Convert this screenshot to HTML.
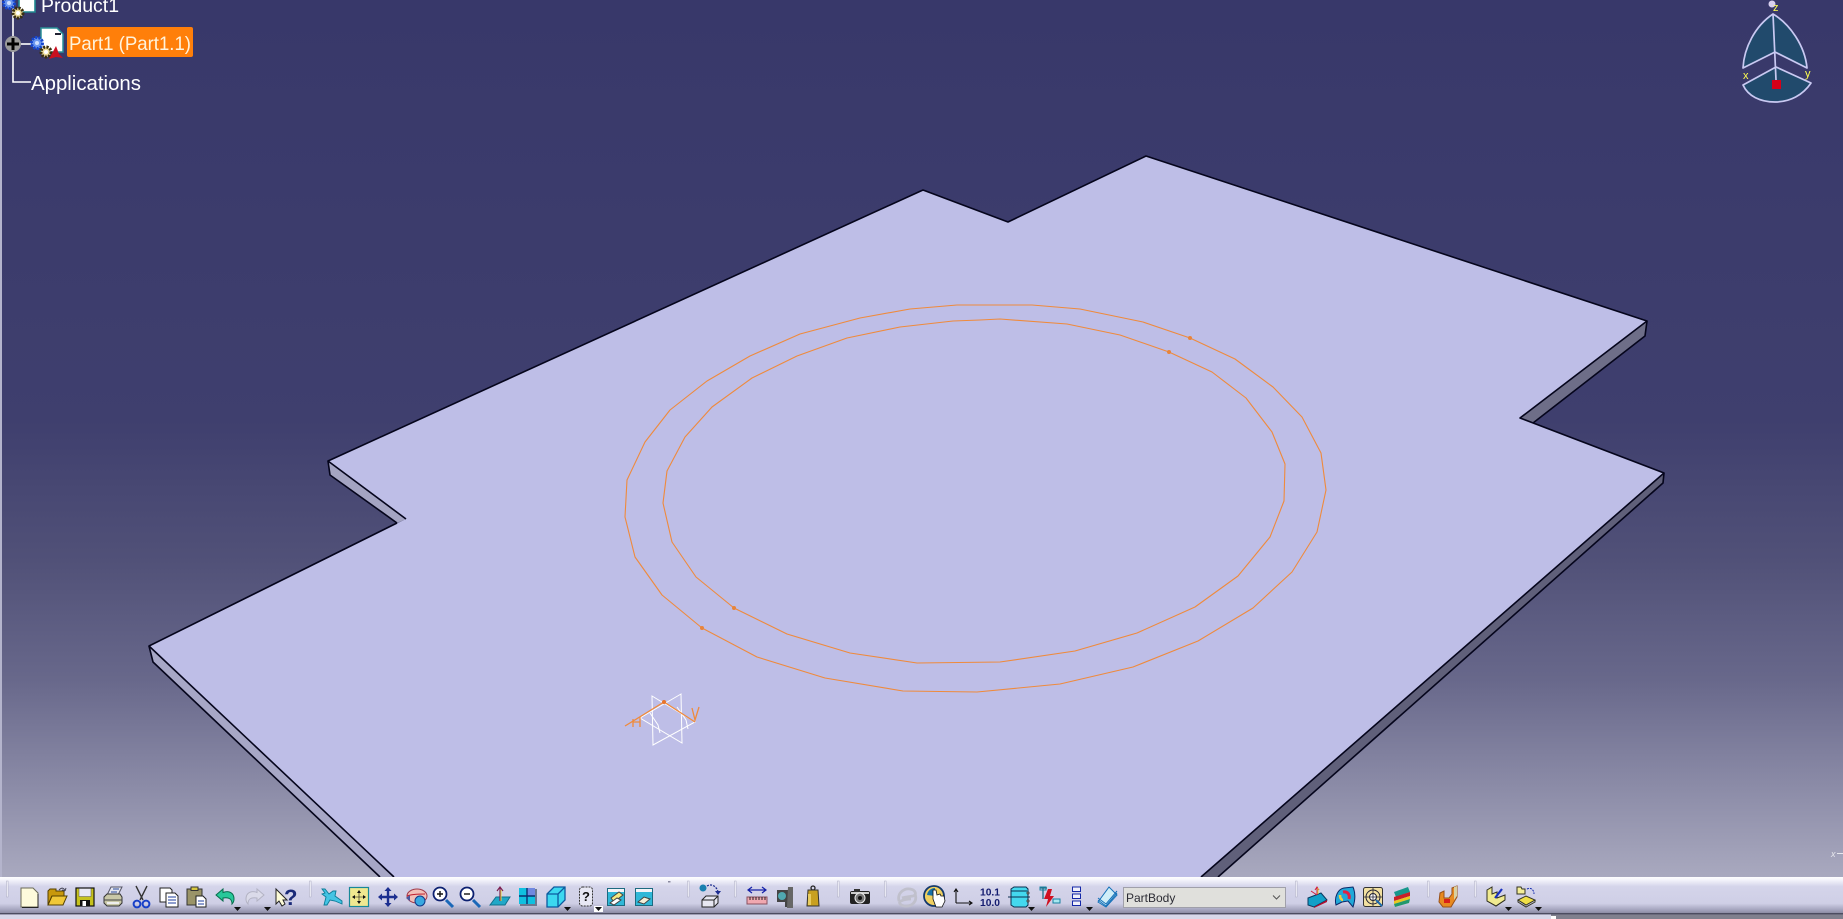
<!DOCTYPE html>
<html><head><meta charset="utf-8"><title>Product1</title>
<style>
html,body{margin:0;padding:0;width:1843px;height:919px;overflow:hidden;background:#38386a}
svg{display:block;position:absolute;left:0;top:0}
text{font-family:"Liberation Sans",sans-serif}
</style></head><body>
<svg width="1843" height="919" viewBox="0 0 1843 919" xmlns="http://www.w3.org/2000/svg">
<defs>
<linearGradient id="bg" gradientUnits="userSpaceOnUse" x1="0" y1="0" x2="0" y2="877">
<stop offset="0" stop-color="#38386a"/><stop offset=".48" stop-color="#3f3f6e"/><stop offset=".64" stop-color="#515178"/><stop offset=".775" stop-color="#68688b"/><stop offset="1" stop-color="#a9a9bf"/>
</linearGradient>
<linearGradient id="tb" gradientUnits="userSpaceOnUse" x1="0" y1="876" x2="0" y2="914">
<stop offset="0" stop-color="#fff"/><stop offset=".08" stop-color="#f8f8fd"/><stop offset=".28" stop-color="#d4d4ea"/><stop offset=".72" stop-color="#cfcfe6"/><stop offset=".92" stop-color="#9c9cb6"/><stop offset="1" stop-color="#84849c"/>
</linearGradient>
</defs>
<rect width="1843" height="877" fill="url(#bg)"/>
<rect x="0" y="0" width="2" height="877" fill="#b4b4cc"/>

<!-- plate -->
<polygon points="149,646 153,662 380,877 394,877" fill="#a7a7c6"/>
<polygon points="328,461 330,475 397,523 406,519" fill="#a4a4c2"/>
<polygon points="1647,321 1645,336 1533,423 1520,418" fill="#6e6e88"/>
<polygon points="1664,473 1663,483 1218,877 1201,877" fill="#60607a"/>
<polygon points="149,646 406,519 328,461 923,190 1008,222 1146,156 1647,321 1520,418 1664,473 1201,877 394,877" fill="#bebee7"/>
<g fill="none" stroke="#05051c" stroke-width="1.6" stroke-linejoin="round">
<polyline points="394,877 149,646 397,523"/>
<polyline points="406,519 328,461 923,190 1008,222 1146,156 1647,321 1520,418 1664,473 1201,877"/>
<polyline points="149,646 153,662 380,877"/>
<polyline points="328,461 330,475 397,523"/>
<polyline points="1647,321 1645,336 1533,423"/>
<polyline points="1664,473 1663,483 1218,877"/>
</g>

<!-- rings -->
<g fill="none" stroke="#ef8a3c" stroke-width="1.1" stroke-linejoin="round">
<polygon points="970,305 1032,305 1080,309 1143,322 1190,338 1235,359 1273,387 1302,417 1321,453 1326,490 1317,532 1292,572 1253,608 1198,641 1133,667 1060,684 977,692 903,691 825,678 757,657 702,628 662,595 635,557 625,517 627,480 645,442 670,410 707,381 750,356 800,334 860,318 910,309 957,305"/>
<polygon points="980,320 1000,319 1067,324 1120,335 1169,352 1212,372 1246,398 1272,432 1285,464 1284,501 1270,537 1238,576 1195,607 1137,633 1075,651 1000,662 917,663 850,653 787,634 734,608 696,577 672,542 663,503 667,471 685,437 712,407 752,378 797,356 847,338 900,327 953,321"/>
</g>
<g fill="#e8843a"><circle cx="734" cy="608" r="2"/><circle cx="702" cy="628" r="2"/><circle cx="1190" cy="338" r="2"/><circle cx="1169" cy="352" r="2"/></g>

<!-- sketch gizmo -->
<g fill="none" stroke="#fff" stroke-width="1">
<polygon points="652,696 695,722 653,745"/><polygon points="681,694 640,718 682,743"/>
<polyline points="650,713 658,725 660,733"/><polyline points="677,707 686,720 688,729"/>
</g>
<g fill="none" stroke="#ef8a3c" stroke-width="1.3">
<polyline points="625,726 664,702 695,722"/>
<path d="M633,719v8M640,717v10M633,722h7M692,708l3,12l4,-13"/>
</g>
<circle cx="664" cy="702" r="2" fill="#e8742a"/>

<!-- compass -->
<g stroke="#c9c9f2" stroke-width="1.7" stroke-linejoin="round">
<path d="M1773,14C1755,26 1744,48 1743,68L1775,52L1807,68C1805,46 1790,24 1773,14Z" fill="#214a6c"/>
<path d="M1743,85L1776,67L1811,83C1803,95 1790,102 1775,102C1760,102 1748,96 1743,85Z" fill="#214a6c"/>
<path d="M1773,14L1776,80" fill="none"/>
</g>
<circle cx="1772" cy="4" r="3.5" fill="#d8d0f0"/>
<rect x="1772" y="80" width="9" height="9" fill="#d80018"/>
<g fill="#ffff50" font-size="11"><text x="1773" y="11">z</text><text x="1743" y="79">x</text><text x="1805" y="77">y</text></g>
<g fill="#fff" opacity=".75"><text x="1831" y="857" font-size="9" font-style="italic">x</text><rect x="1837" y="853" width="6" height="1"/></g>

<!-- tree -->
<g stroke="#fff" fill="none" stroke-width="1.6">
<path d="M13,0V82H31"/><path d="M20,44H31"/>
</g>
<text x="41" y="12" font-size="19.5" fill="#fff">Product1</text>
<rect x="67" y="27" width="126" height="30" rx="2" fill="#ff7f0a"/>
<text x="69" y="50" font-size="19.5" fill="#fff3dc" textLength="122" lengthAdjust="spacingAndGlyphs">Part1 (Part1.1)</text>
<text x="31" y="90" font-size="20.4" fill="#fff">Applications</text>
<circle cx="13" cy="44" r="8" fill="#9a9a9a"/><path d="M7,44H19M13,38V50" stroke="#000" stroke-width="3"/>
<!-- product icon -->
<path d="M19,-4H35V12H19Z" fill="#fff" stroke="#208890" stroke-width="1.6"/>
<circle cx="9" cy="3" r="5.5" fill="#6c98f0" stroke="#1446d0" stroke-dasharray="2.2 1.2" stroke-width="3"/><circle cx="9" cy="3" r="2" fill="#cfe0ff"/>
<circle cx="18" cy="13" r="5" fill="#ecdc98" stroke="#3a2f10" stroke-dasharray="2.2 1.2" stroke-width="3"/><circle cx="18" cy="13" r="2" fill="#fff"/>
<!-- part icon -->
<path d="M41,28H57L63,34V52H41Z" fill="#fff" stroke="#2a9098" stroke-width="1.5"/><rect x="55" y="33" width="6" height="2" fill="#223"/>
<circle cx="37" cy="43" r="5.5" fill="#6c98f0" stroke="#1446d0" stroke-dasharray="2.2 1.2" stroke-width="3"/><circle cx="37" cy="43" r="2" fill="#cfe0ff"/>
<circle cx="46" cy="52" r="5" fill="#ecdc98" stroke="#3a2f10" stroke-dasharray="2.2 1.2" stroke-width="3"/><circle cx="46" cy="52" r="2" fill="#fff"/>
<path d="M49,59L56,46L59,54L63,58L56,57Z" fill="#c81020"/>

<!-- toolbar -->
<rect x="0" y="877" width="1843" height="37" fill="url(#tb)"/>
<rect x="0" y="913" width="1843" height="1.4" fill="#4c4c60"/>
<rect x="0" y="914.4" width="1551" height="5" fill="#d8d8ea"/>
<rect x="1551" y="914.4" width="292" height="5" fill="#80808e"/>
<rect x="1551" y="916" width="5" height="3" fill="#fff"/>
<!-- separators -->
<g fill="#f4f4fb" stroke="#a8a8c0" stroke-width=".5">
<rect x="6.5" y="881" width="1.6" height="16"/><rect x="309.5" y="881" width="1.6" height="16"/><rect x="687.5" y="881" width="1.6" height="16"/><rect x="734.5" y="881" width="1.6" height="16"/><rect x="837.5" y="881" width="1.6" height="16"/><rect x="884.5" y="881" width="1.6" height="16"/><rect x="1295.5" y="881" width="1.6" height="16"/><rect x="1427.5" y="881" width="1.6" height="16"/><rect x="1474.5" y="881" width="1.6" height="16"/>
</g>
<rect x="668" y="881" width="2.5" height="1.5" fill="#8a8aa0"/>
<!-- dropdown arrows -->
<g fill="#111"><path d="M234,907h7l-3.5,4zM264,907h7l-3.5,4zM564,907h7l-3.5,4zM1028,907h7l-3.5,4zM1086,907h7l-3.5,4zM1505,907h7l-3.5,4zM1535,907h7l-3.5,4z"/></g>
<rect x="594" y="906" width="9" height="6" fill="#fff"/><path d="M595,907h7l-3.5,4z" fill="#111"/>

<!-- new -->
<g transform="translate(29,897)"><path d="M-8,-9H4L9,-4V10H-8Z" fill="#fdfadc" stroke="#6a6a58"/><path d="M9,-3V10.500H-7" fill="none" stroke="#222"/></g>
<!-- open -->
<g transform="translate(57,897)"><path d="M-9,8V-6L-7,-8H-1V-6H7V-1H-5L-9,8Z" fill="#c8980c" stroke="#554000"/><path d="M-9,8L-5,-1H10L6,8Z" fill="#f0c838" stroke="#554000"/><path d="M2,-7C5,-10 7,-9 8,-6M8,-6L5,-7M8,-6L9,-9" fill="none" stroke="#445" /></g>
<!-- save -->
<g transform="translate(85,897)"><rect x="-9" y="-9" width="18" height="18" fill="#c6c21c" stroke="#111" stroke-width="1.2"/><rect x="-6" y="-8.500" width="12" height="8" fill="#e8e8f2" stroke="#555" stroke-width=".5"/><rect x="-5" y="3" width="10" height="6" fill="#111"/><rect x="-2.500" y="4" width="3.500" height="5" fill="#fff"/></g>
<!-- print -->
<g transform="translate(113,897)"><path d="M-2,-10H9L5,-2H-6Z" fill="#e4e6f0" stroke="#556"/><path d="M0,-8h6M-2,-5h6" stroke="#2a4a9a"/><path d="M-9,0L-6,-3H7L9,0V6L6,9H-6L-9,6Z" fill="#c9c8a8" stroke="#333"/><path d="M-9,3H9" stroke="#444"/><rect x="-6" y="5" width="12" height="2" fill="#eee"/></g>
<!-- cut -->
<g transform="translate(141,897)"><path d="M-5,-11L2,3M6,-11L-1,3" stroke="#333" stroke-width="1.4" fill="none"/><circle cx="-4" cy="7" r="3.400" fill="none" stroke="#1840c8" stroke-width="2"/><circle cx="5" cy="7" r="3.400" fill="none" stroke="#1840c8" stroke-width="2"/></g>
<!-- copy -->
<g transform="translate(169,897)"><path d="M-9,-9H1L3,-7V5H-9Z" fill="#fff" stroke="#222"/><path d="M-3,-4H6L9,-1V10H-3Z" fill="#fff" stroke="#222"/><path d="M-1,0h8M-1,3h8M-1,6h8" stroke="#1c3c9c"/></g>
<!-- paste -->
<g transform="translate(197,897)"><rect x="-10" y="-8" width="15" height="16" fill="#9a9468" stroke="#333"/><rect x="-6" y="-10" width="7" height="3.500" fill="#d8c840" stroke="#333"/><path d="M-1,-1H6L9,2V10H-1Z" fill="#fff" stroke="#222"/><path d="M1,4h6M1,7h6" stroke="#1c3c9c"/></g>
<!-- undo -->
<g transform="translate(225,897)"><path d="M-9,-2L-2,-8V-4.500C4,-7 9,-4 9,2C9,4 8,6 7,7C7,2 4,0 -2,1V4Z" fill="#28c89a" stroke="#086c4c"/></g>
<!-- redo -->
<g transform="translate(255,897)" opacity=".9"><path d="M9,-2L2,-8V-4.500C-4,-7 -9,-4 -9,2C-9,4 -8,6 -7,7C-7,2 -4,0 2,1V4Z" fill="#dcdcea" stroke="#b0b0c0"/></g>
<!-- help -->
<g transform="translate(285,897)"><path d="M-9,-8V7L-6,4L-3,9L0,7L-2,3H2Z" fill="#fdfbd8" stroke="#222"/><text x="-1" y="8" font-size="22" font-weight="bold" fill="#1a2a78">?</text></g>
<!-- fly -->
<g transform="translate(332,897)"><path d="M-10,-8L-7,-8L-3,-3L1,-6L4,-6L3,-1L10,4L10,7L3,4L-2,3L-5,8L-8,8L-6,0L-10,-3L-7,-4Z" fill="#44c4e4" stroke="#0c7c98" stroke-width=".9"/></g>
<!-- fit -->
<g transform="translate(359,897)"><rect x="-9.500" y="-9.500" width="19" height="19" fill="#f0e890" stroke="#188898" stroke-width="1.2"/><path d="M0,-7l-2,3h4zM0,7l-2,-3h4zM-7,0l3,-2v4zM7,0l-3,-2v4z" fill="#111"/><path d="M0,-5V5M-5,0H5" stroke="#111" stroke-width=".6"/></g>
<!-- pan -->
<g transform="translate(388,897)"><path d="M0,-10l-3.500,4h2.300v4.800h-4.800v-2.300l-4,3.500l4,3.500v-2.300h4.800v4.800h-2.300l3.500,4l3.500,-4h-2.300v-4.800h4.800v2.300l4,-3.500l-4,-3.500v2.300h-4.800v-4.800h2.300z" fill="#1c2f90"/></g>
<!-- rotate -->
<g transform="translate(416,897)"><ellipse cx="1" cy="-1" rx="10" ry="7" fill="#f2c0b8" stroke="#a03848"/><path d="M-9,-1C-4,-3 4,-3 9,-3" stroke="#c02030" fill="none"/><circle cx="4" cy="4" r="5" fill="#38a8e0" stroke="#103888"/><path d="M-10,1L-6,-2V4Z" fill="#4858a0"/></g>
<!-- zoom in -->
<g transform="translate(443,897)"><path d="M3,3L10,10" stroke="#1a68b8" stroke-width="3"/><circle cx="-3" cy="-3" r="6.500" fill="#fff" stroke="#0c2070" stroke-width="1.800"/><path d="M-6,-3H0M-3,-6V0" stroke="#111" stroke-width="1.400"/></g>
<!-- zoom out -->
<g transform="translate(470,897)"><path d="M3,3L10,10" stroke="#1a68b8" stroke-width="3"/><circle cx="-3" cy="-3" r="6.500" fill="#fff" stroke="#0c2070" stroke-width="1.800"/><path d="M-6,-3H0" stroke="#111" stroke-width="1.400"/></g>
<!-- normal view -->
<g transform="translate(500,897)"><path d="M-10,8L-4,0H10L5,8Z" fill="#20a8c8" stroke="#10708c"/><path d="M0,4V-9M-3,-6L0,-10L3,-6" fill="none" stroke="#7c2050" stroke-width="1.200"/><path d="M1,4V-7" stroke="#e8d840" stroke-width="1"/></g>
<!-- multi view -->
<g transform="translate(528,897)"><rect x="-9" y="-9" width="16" height="16" fill="#10c0e0"/><rect x="-1" y="-9" width="8" height="8" fill="#7088e0"/><path d="M-9,-1H7M-1,-9V7" stroke="#0a3070" stroke-width="1.400"/><path d="M7,-8H9V9H-8V7H7Z" fill="#6c7890"/></g>
<!-- iso -->
<g transform="translate(556,897)"><path d="M-9,-3L-2,-10H9V3L2,10H-9Z" fill="#3cd8f0" stroke="#0c5aa0" stroke-width="1.300"/><path d="M-9,-3H2V10M2,-3L9,-10" fill="none" stroke="#0c5aa0" stroke-width="1.300"/></g>
<!-- hide -->
<g transform="translate(586,897)"><rect x="-6.500" y="-10" width="13" height="19" rx="3" fill="#e8e8f4" stroke="#333" stroke-dasharray="2 1"/><text x="-4" y="4" font-size="13" font-weight="bold" fill="#111">?</text></g>
<!-- swap -->
<g transform="translate(616,897)"><rect x="-8.500" y="-8.500" width="17" height="17" fill="#30b8d8" stroke="#1c6a80"/><rect x="-8" y="-8" width="16" height="3" fill="#f4f4f8"/><path d="M-5,1L3,-5L7,-2L-2,5Z" fill="#f2e880" stroke="#444"/><path d="M-6,6L1,1L5,3L-2,8Z" fill="#fff" stroke="#444"/></g>
<g transform="translate(644,897)"><rect x="-8.500" y="-8.500" width="17" height="17" fill="#30b8d8" stroke="#1c6a80"/><rect x="-8" y="-8" width="16" height="3" fill="#f4f4f8"/><path d="M-6,5L0,0L6,2L0,7Z" fill="#f4f0d8" stroke="#444"/></g>
<!-- insert -->
<g transform="translate(710,897)"><circle cx="-7" cy="-9" r="3.500" fill="#1880b0"/><path d="M-3,-11C2,-14 7,-10 8,-5" fill="none" stroke="#1c2c90" stroke-dasharray="2 1.200" stroke-width="1.300"/><path d="M5,-6h6l-3,4z" fill="#1c2c90"/><path d="M-8,3L-4,-1H8V6L4,10H-8ZM-8,3H4V10M4,3L8,-1" fill="#e8e8f2" stroke="#222"/></g>
<!-- measure -->
<g transform="translate(757,897)"><path d="M-8,-7H8M-5,-10L-9,-7L-5,-4M5,-10L9,-7L5,-4" fill="none" stroke="#1420a8" stroke-width="1.200"/><rect x="-10" y="0" width="20" height="7" fill="#f0a8b0" stroke="#885060"/><path d="M-7,0v3M-4,0v3M-1,0v3M2,0v3M5,0v3M8,0v3" stroke="#222"/></g>
<!-- inertia -->
<g transform="translate(785,897)"><path d="M-8,-7H7V10H0V5H-8Z" fill="#444"/><path d="M3,-10H8V11H2Z" fill="#666"/><circle cx="-3" cy="-1" r="4" fill="#50a8b0"/></g>
<!-- weight -->
<g transform="translate(813,897)"><rect x="-2" y="-11" width="4" height="4" rx="2" fill="none" stroke="#222" stroke-width="1.300"/><path d="M-5,-7H5L6,9H-6Z" fill="#c8a020" stroke="#333"/><rect x="-5" y="-3" width="3" height="11" fill="#e8cc60"/></g>
<!-- camera -->
<g transform="translate(860,897)"><rect x="-10" y="-6" width="20" height="13" rx="2" fill="#222"/><rect x="-6" y="-8" width="6" height="3" fill="#333"/><rect x="-9" y="-5" width="18" height="2" fill="#ccc"/><circle cx="0" cy="1" r="5" fill="#777" stroke="#eee"/><circle cx="0" cy="1" r="2" fill="#111"/></g>
<!-- swirl -->
<g transform="translate(907,897)" fill="none" stroke="#c0c0cc" stroke-width="2.800"><path d="M-8,4C-10,-4 -3,-9 3,-8C9,-7 10,-2 6,-1C1,0 -2,0 -5,1"/><path d="M8,-3C11,5 4,10 -3,9C-7,8 -9,5 -6,4C-2,2 2,2 4,2"/></g>
<!-- hand -->
<g transform="translate(935,897)"><circle cx="-1" cy="-1" r="10" fill="#f0d060" stroke="#14386c" stroke-width="1.800"/><path d="M-8,-2A8,8 0 0 1 0,-9L0,-1Z" fill="#1870a8"/><path d="M1,10L-2,2V-7L1,-7L2,-2L5,-3L6,-1L9,-1L10,4L7,10Z" fill="#fff" stroke="#111" stroke-width=".8"/></g>
<!-- axis -->
<g transform="translate(965,897)"><path d="M-9,6V-8M-9,6H7M-11,-5L-9,-8L-7,-5M4,4L7,6L4,8" fill="none" stroke="#111" stroke-width="1.100"/></g>
<!-- 10.1 -->
<g transform="translate(990,897)" fill="#141c70" font-size="10.500" font-weight="bold"><text x="-10" y="-1.500" textLength="20" lengthAdjust="spacingAndGlyphs">10.1</text><text x="-10" y="9" textLength="20" lengthAdjust="spacingAndGlyphs">10.0</text></g>
<!-- cylinder -->
<g transform="translate(1019,897)"><path d="M-8,-8L-5,-10H7L9,-8V8L7,10H-5L-8,8Z" fill="#44d8ee" stroke="#0c3050"/><path d="M-11,0H11M-8,-6H8" stroke="#0c3050" stroke-width=".9"/><circle cx="9" cy="-4" r="1" fill="#fff" stroke="#333"/><circle cx="9" cy="4" r="1" fill="#fff" stroke="#333"/></g>
<!-- constraints -->
<g transform="translate(1049,897)"><path d="M-9,-9H-2M-6,-9V2" fill="none" stroke="#1c7088" stroke-width="1.300"/><rect x="-9" y="-10" width="6" height="3" fill="none" stroke="#1880a0"/><path d="M-1,-8L-5,2H-1L-3,10L5,-1H1L3,-8Z" fill="#d01020"/><rect x="4" y="2" width="7" height="4" fill="#a8e8f0" stroke="#1880a0"/></g>
<!-- list -->
<g transform="translate(1077,897)" fill="#f0f0fa" stroke="#1428a8"><rect x="-4.500" y="-10" width="8" height="4.500"/><rect x="-4.500" y="-3" width="8" height="4.500"/><rect x="-4.500" y="4" width="8" height="4.500"/></g>
<!-- layers -->
<g transform="translate(1107,897)" fill="#cfeef8" stroke="#1470b8"><path d="M-9,5L2,-10L10,-2L-1,10Z"/><path d="M-9,3L-1,9L10,-4" fill="none"/><path d="M-9,1L-1,7L10,-6" fill="none"/></g>
<!-- combo -->
<rect x="1123.500" y="887.500" width="162" height="20" fill="#e0e0dc" stroke="#a0a0aa"/>
<text x="1126" y="902" font-size="12" fill="#2c2c34">PartBody</text>
<path d="M1273,895.500l3.500,3.500l3.500,-3.500" fill="none" stroke="#555" stroke-width="1"/>
<!-- apps -->
<g transform="translate(1317,897)"><path d="M-9,1L4,-4L10,3L-3,10L-9,8Z" fill="#12a0c8" stroke="#0a3a60"/><path d="M-3,10L10,3L10,5L-3,11Z" fill="#b01030"/><path d="M0,-2V-10M-2,-7L0,-10L2,-7M0,-2L-6,-6" stroke="#d02040" fill="none"/><path d="M1,-3V-9" stroke="#e8e040" fill="none"/></g>
<g transform="translate(1345,897)"><path d="M-9,8C-11,0 -7,-8 -1,-9L8,-10C11,-3 10,4 8,10L3,4L-3,5Z" fill="#20a8d8" stroke="#0a2868"/><path d="M-2,-5C3,-6 5,-2 4,2" fill="none" stroke="#e02040" stroke-width="3"/><path d="M-5,-2C-5,2 -3,3 -2,3" fill="none" stroke="#f0d040" stroke-width="2.500"/></g>
<g transform="translate(1373,897)"><rect x="-9.500" y="-9.500" width="19" height="19" rx="2" fill="#f2e0a0" stroke="#333"/><circle cx="0" cy="0" r="7" fill="none" stroke="#223"/><circle cx="0" cy="0" r="3.500" fill="#fff" stroke="#223"/><path d="M-9,0H9M0,-9V9" stroke="#223" stroke-width=".8"/><path d="M3,3L9,9" stroke="#1c6ab0" stroke-width="2"/></g>
<g transform="translate(1402,897)"><path d="M-8,-5L6,-10L8,-5L-6,0Z" fill="#18988c"/><path d="M-8,0L8,-5V-1L-8,4Z" fill="#c82028"/><path d="M-8,4L8,-1V2L-8,7Z" fill="#e8c820"/><path d="M-8,7L8,2L7,6L-7,10Z" fill="#22986c"/></g>
<g transform="translate(1448,897)"><path d="M-8,-4L-4,-6V1L1,1L4,-3V-9L9,-11V0L3,10H-5L-9,5Z" fill="#e88a20" stroke="#985018"/><path d="M-4,2H2V6H-4Z" fill="#d82018"/><path d="M6,-10L9,-11V-1L6,3Z" fill="#d8d0a0"/></g>
<g transform="translate(1496,897)"><path d="M-9,0V-7L-4,-10V-3L1,-5V1L9,-2V3L0,9L-9,4Z" fill="#f0ea90" stroke="#332"/><path d="M-1,1L6,-8" stroke="#1830c0" stroke-width="2.200"/><path d="M-9,4L0,9L9,3" fill="none" stroke="#332"/></g>
<g transform="translate(1526,897)"><path d="M-9,-8V-3H-1V-8H-4L-5,-10H-9Z" fill="#f4ee98" stroke="#332"/><path d="M1,-8C5,-10 8,-7 8,-3" fill="none" stroke="#1830b0" stroke-dasharray="2 1"/><path d="M-8,3L0,-1L9,3L0,8Z" fill="#f0e048" stroke="#332"/><path d="M-8,3V5L0,10L9,5V3" fill="none" stroke="#332"/></g>
</svg>
</body></html>
